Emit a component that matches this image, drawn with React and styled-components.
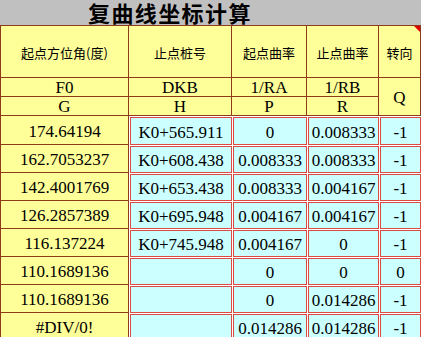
import React from "react";
import styled, { createGlobalStyle } from "styled-components";

const GlobalStyle = createGlobalStyle`
  html, body { margin: 0; padding: 0; background: #fff; }
  body { font-family: "Liberation Serif", "Noto Sans CJK SC", serif; }
`;

const BROWN = "#8e3b1c";
const RED = "#dc4a44";
const YELLOW = "#ffff99";
const CYAN = "#ccffff";

const Page = styled.div`
  width: 421px;
  height: 337px;
  overflow: hidden;
  background: #fff;
`;

const TitleBar = styled.div`
  height: 25px;
  background: #c0c0c0;
  padding-left: 88px;
  font-family: "Noto Sans CJK SC", sans-serif;
  font-weight: 700;
  font-size: 22px;
  line-height: 25px;
  color: #000;
  letter-spacing: 1.4px;
`;

const Sheet = styled.div`
  display: grid;
  grid-template-columns: 128px 103px 75px 72px 42px;
  grid-template-rows: 52px 19px 19px 29px repeat(7, 28px);
  border-top: 1px solid ${BROWN};
  border-left: 1px solid ${BROWN};
`;

const HeadCell = styled.div`
  position: relative;
  box-sizing: border-box;
  background: ${YELLOW};
  border-right: 1px solid ${BROWN};
  border-bottom: 1px solid ${BROWN};
  display: flex;
  align-items: center;
  justify-content: center;
  color: #000;
  white-space: nowrap;
  grid-row: ${(p) => (p.$span ? `span ${p.$span}` : "auto")};
  font-family: ${(p) =>
    p.$cjk ? `"Noto Sans CJK SC", sans-serif` : `"Liberation Serif", serif`};
  font-size: ${(p) => (p.$cjk ? "13px" : "17px")};
  line-height: 1;
  padding-top: ${(p) => (p.$cjk ? "1px" : "1px")};

  ${(p) =>
    p.$flag &&
    `
    &::after {
      content: "";
      position: absolute;
      top: 0;
      right: 0;
      border-top: 6px solid #e00000;
      border-left: 6px solid transparent;
    }
  `}
`;

const DataCell = styled.div`
  box-sizing: border-box;
  display: flex;
  align-items: center;
  justify-content: center;
  white-space: nowrap;
  font-family: "Liberation Serif", serif;
  font-size: 17px;
  line-height: 1;
  padding-top: 2px;
  color: #000;
  background: ${(p) => (p.$tone === "cyan" ? CYAN : YELLOW)};
  ${(p) =>
    p.$tone === "cyan"
      ? `
    border-left: 1px solid #fff;
    border-top: 1px solid #fff;
    box-shadow: inset 0 0 0 1px ${RED};
  `
      : `
    border-right: 1px solid ${BROWN};
    border-bottom: 1px solid ${BROWN};
  `}
`;

const rows = [
  ["174.64194", "K0+565.911", "0", "0.008333", "-1"],
  ["162.7053237", "K0+608.438", "0.008333", "0.008333", "-1"],
  ["142.4001769", "K0+653.438", "0.008333", "0.004167", "-1"],
  ["126.2857389", "K0+695.948", "0.004167", "0.004167", "-1"],
  ["116.137224", "K0+745.948", "0.004167", "0", "-1"],
  ["110.1689136", "", "0", "0", "0"],
  ["110.1689136", "", "0", "0.014286", "-1"],
  ["#DIV/0!", "", "0.014286", "0.014286", "-1"],
];

export default function App() {
  return (
    <Page>
      <GlobalStyle />
      <TitleBar>复曲线坐标计算</TitleBar>
      <Sheet>
        <HeadCell $cjk>起点方位角(度)</HeadCell>
        <HeadCell $cjk>止点桩号</HeadCell>
        <HeadCell $cjk>起点曲率</HeadCell>
        <HeadCell $cjk>止点曲率</HeadCell>
        <HeadCell $cjk $flag>转向</HeadCell>

        <HeadCell>F0</HeadCell>
        <HeadCell>DKB</HeadCell>
        <HeadCell>1/RA</HeadCell>
        <HeadCell>1/RB</HeadCell>
        <HeadCell $span={2}>Q</HeadCell>

        <HeadCell>G</HeadCell>
        <HeadCell>H</HeadCell>
        <HeadCell>P</HeadCell>
        <HeadCell>R</HeadCell>

        {rows.map((r, i) =>
          r.map((v, j) => (
            <DataCell key={`${i}-${j}`} $tone={j === 0 ? "yellow" : "cyan"}>
              {v}
            </DataCell>
          ))
        )}
      </Sheet>
    </Page>
  );
}
